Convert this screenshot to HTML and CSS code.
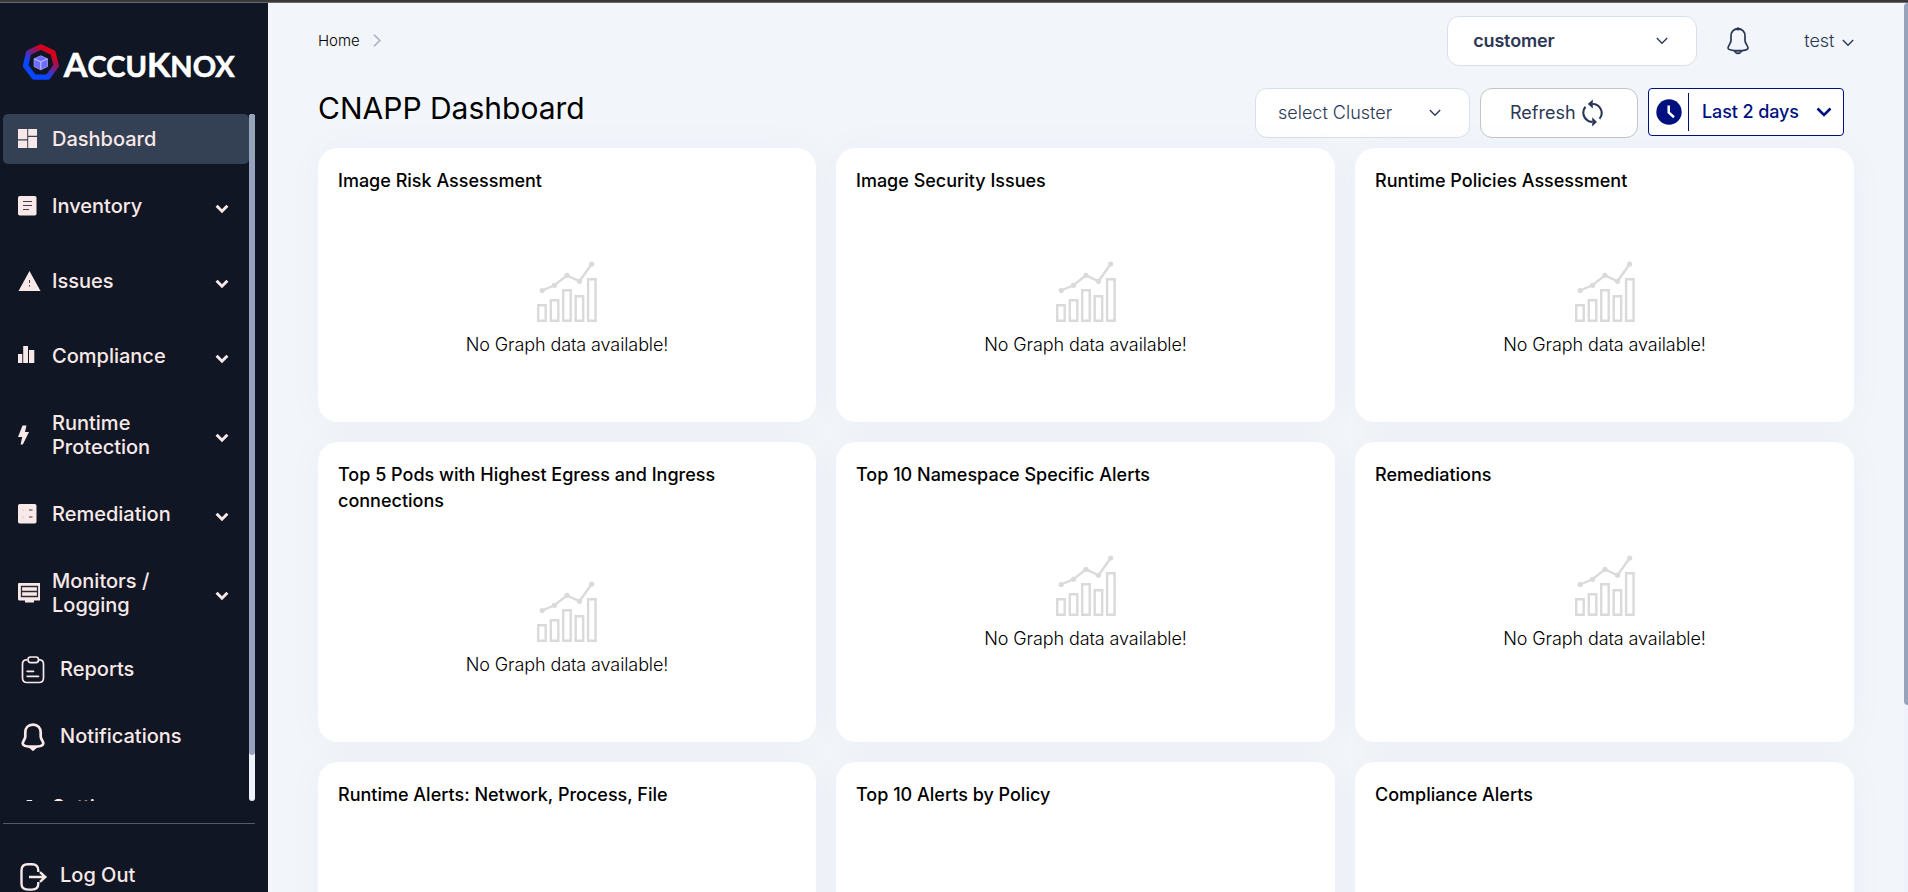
FILE: index.html
```html
<!DOCTYPE html>
<html lang="en">
<head>
<meta charset="utf-8">
<title>CNAPP Dashboard</title>
<link rel="stylesheet" href="styles.css">
</head>
<body>
<svg class="defs" aria-hidden="true">
  <symbol id="chev" viewBox="0 0 14 10"><path d="M1.6 1.8 7 7.2 12.4 1.8" fill="none" stroke="currentColor" stroke-width="3"/></symbol>
  <symbol id="thin" viewBox="0 0 12 8"><path d="M.8 1 6 6.3 11.200 1" fill="none" stroke="currentColor" stroke-width="1.3"/></symbol>
  <symbol id="chart" viewBox="0 0 60 61">
    <g fill="none" stroke="#dadada" stroke-width="2.400">
      <path d="M1.200 44.200h7.500v15.600H1.200zM13.800 39.200h7.500v20.600h-7.500zM26.200 29.200h7.500v30.600h-7.500zM38.700 35.200h7.500v24.600h-7.500zM51.100 18.200h7.500v41.600h-7.500z"/>
      <path d="M5.200 29.500 17.500 24.300 30 14.300 42.500 20.300 54.700 3"/>
    </g>
    <g fill="#dadada"><circle cx="5.200" cy="29.500" r="2.600"/><circle cx="17.500" cy="24.300" r="2.600"/><circle cx="30" cy="14.300" r="2.600"/><circle cx="42.500" cy="20.300" r="2.600"/><circle cx="54.700" cy="3" r="2.600"/></g>
  </symbol>
</svg>
<div class="topline"></div>
<div class="app">
  <aside class="sidebar">
    <svg class="logo" viewBox="0 0 220 40">
      <defs><linearGradient id="ring" x1=".8" y1=".1" x2=".25" y2=".8"><stop offset=".12" stop-color="#d4001c"/><stop offset=".85" stop-color="#0a45ff"/></linearGradient></defs>
      <path d="M18.800 2.900 31 8.700 34.200 21.600 25.800 33.100H12.200L3.600 21.800 6.600 8.700Z" fill="none" stroke="url(#ring)" stroke-width="5.400" stroke-linejoin="round"/>
      <path d="M18.800 11.800 25.500 14.800V22.600L18.800 25.800 12.100 22.600V14.800Z" fill="#6d6cff" stroke="#a09fff" stroke-width=".8"/>
      <path d="M12.300 14.900 18.800 17.900 25.300 14.900M18.800 17.900V25.500" fill="none" stroke="#c9c8ff" stroke-width="1"/>
      <text x="41.800" y="32.600" textLength="171" lengthAdjust="spacingAndGlyphs" class="logo-text">A<tspan class="small">CCU</tspan>K<tspan class="small">NOX</tspan></text>
    </svg>
    <div class="nav-wrap">
      <nav class="nav">
        <a class="item active"><svg class="ic" viewBox="0 0 24 24"><path fill="currentColor" d="M0 0h9.200v10.300H0zM10.200 0H19v6.800h-8.800zM0 11.500h9.200V19H0zM10.200 8H19v11h-8.800z"/></svg><span class="label">Dashboard</span></a>
        <a class="item first"><svg class="ic" viewBox="0 0 24 24"><rect width="18.500" height="19.500" rx="1.800" fill="currentColor"/><path d="M5 5.500h9M5 9.500h9M5 13.500h6" stroke="#453f4a" stroke-width="1.100"/></svg><span class="label">Inventory</span><svg class="chev"><use href="#chev"/></svg></a>
        <a class="item"><svg class="ic" viewBox="0 0 24 24"><path d="M11.500 0 22.500 20H.5z" fill="currentColor"/><path d="M11.500 9v3M11.500 14v1.500" stroke="#453f4a"/></svg><span class="label">Issues</span><svg class="chev"><use href="#chev"/></svg></a>
        <a class="item"><svg class="ic" viewBox="0 0 24 24"><path d="M0 8h4.300v9H0zM5.200 0H10v17H5.200zM11 4h5.300v13H11z" fill="currentColor"/></svg><span class="label">Compliance</span><svg class="chev"><use href="#chev"/></svg></a>
        <a class="item two"><svg class="ic" viewBox="0 0 24 24"><path d="M4.500 .500H8.500L7 7H11L4.800 19.500H2.600L4.200 12H0z" fill="currentColor"/></svg><span class="label">Runtime<br>Protection</span><svg class="chev"><use href="#chev"/></svg></a>
        <a class="item"><svg class="ic" viewBox="0 0 24 24"><rect width="18.500" height="19.500" rx="1.800" fill="currentColor"/><path d="M11 6h3.500M11 13h3.500" stroke="#453f4a" stroke-width="1.200"/><path d="M4.500 6H6M4.500 13H6" stroke="#cfc2c4"/></svg><span class="label">Remediation</span><svg class="chev"><use href="#chev"/></svg></a>
        <a class="item two"><svg class="ic" viewBox="0 0 24 24"><path d="M1 0H22v17.500H16V19.500H7V17.500H1.500Q0 17.500 0 16V1Q0 0 1 0Z" fill="currentColor"/><path d="M3.500 3.500H19.500V13.500H3.500ZM3.500 8.500H19.500" fill="none" stroke="#2a2934" stroke-width="1.300"/></svg><span class="label">Monitors /<br>Logging</span><svg class="chev"><use href="#chev"/></svg></a>
        <a class="item wide gap"><svg class="ic big" viewBox="0 0 24 28"><g fill="none" stroke="currentColor" stroke-width="1.700"><path d="M6 3.800H5Q1.500 4 1.500 8V22Q1.500 26.500 6 26.500H18Q22.500 26.500 22.500 22V8Q22.500 4 19 3.800H18"/><rect x="7" y="1" width="10.500" height="5.600" rx="2.600"/><path d="M6.200 15.300H12.500M6.200 20.300H17.500" stroke-linecap="round"/></g></svg><span class="label">Reports</span></a>
        <a class="item wide"><svg class="ic big" viewBox="0 0 24 28"><path d="M12 1.600C7 1.600 4.300 5 4.300 9.300V13.500C4.300 16 1.700 18.300 1.700 20.500C1.700 23 6 23.700 12 23.700S22.300 23 22.300 20.500C22.300 18.300 19.700 16 19.700 13.500V9.300C19.700 5 17 1.600 12 1.600Z" fill="none" stroke="currentColor" stroke-width="2.700"/><path d="M6.500 23.500 12 28.200 17.500 23.500z" fill="currentColor"/></svg><span class="label">Notifications</span></a>
        <a class="item"><svg class="ic gear" viewBox="0 0 24 24"><path d="M8 0h5l1 3 2 .500 3-1 2 4-3 4 3 4-2 4-4-1-2 1-1 3H8l-1-3-2-1-4 1-2-4 3-4-3-4 2-4 3 1 2-.500z" fill="currentColor"/></svg><span class="label">Settings</span></a>
      </nav>
      <div class="track"><div class="thumb"></div></div>
    </div>
    <a class="logout"><svg class="ic out" viewBox="0 0 28 28"><path d="M18.300 9V7.500Q18.300 1.300 12 1.300H8Q1.500 1.300 1.500 7.500V20.500Q1.500 26.600 8 26.600H12Q18.300 26.600 18.300 20.500V19" fill="none" stroke="currentColor" stroke-width="2.400"/><path d="M9 14H25M20 9.200 25.300 14 20 18.800" fill="none" stroke="currentColor" stroke-width="2.400"/></svg><span class="label">Log Out</span></a>
  </aside>
  <main class="main">
    <header class="header">
      <div class="crumb">Home<svg width="8" height="13" viewBox="0 0 8 13"><path d="M1 .8 6.800 6.500 1 12.200" fill="none" stroke="#a9adc4" stroke-width="1.500"/></svg></div>
      <div class="box customer"><span>customer</span><svg class="thin"><use href="#thin"/></svg></div>
      <svg class="bell" viewBox="0 0 22 28"><path d="M11 1.800C6.500 1.800 4 5 4 9V13.500C4 16.500 1 18.500 1 21C1 23 5 23.600 11 23.600S21 23 21 21C21 18.500 18 16.500 18 13.500V9C18 5 15.500 1.800 11 1.800Z" fill="none" stroke="#2b3755" stroke-width="1.700"/><path d="M8 2.200Q11-.8 14 2.200L11 3z" fill="#2b3755" stroke="#2b3755"/><path d="M7 23.800Q11 29.500 15 23.800z" fill="#7d87a0" stroke="#2b3755" stroke-width="1.300"/></svg>
      <div class="user">test<svg class="thin"><use href="#thin"/></svg></div>
    </header>
    <div class="toolbar">
      <h1 class="title">CNAPP Dashboard</h1>
      <div class="box cluster"><span>select Cluster</span><svg class="thin"><use href="#thin"/></svg></div>
      <div class="box refresh"><span>Refresh</span><svg width="21" height="28" viewBox="0 0 21 28"><path d="M5.500 21.300A9 9 0 0 1 3.500 7.800M10.500 5A9 9 0 0 1 17.500 19.800M10 22.900Q7 22.900 5 21" fill="none" stroke="#2b3755" stroke-width="2.100"/><path d="M10.800.5V9.500L5.800 5zM10.200 18.300V27.500L15 23z" fill="#2b3755"/></svg></div>
      <div class="range"><svg width="26" height="26" viewBox="0 0 26 26"><circle cx="13" cy="13" r="12.700" fill="#00107f"/><path d="M12.700 6.500V13.500L18 18.200" fill="none" stroke="#fff" stroke-width="2.500"/></svg><i class="sep"></i><span>Last 2 days</span><svg class="rchev" viewBox="0 0 16 10"><path d="M1.500 1.500 8 8 14.500 1.500" fill="none" stroke="#00107f" stroke-width="2.600"/></svg></div>
    </div>
    <section class="grid">
      <article class="card"><h2>Image Risk Assessment</h2><div class="empty"><svg><use href="#chart"/></svg><p>No Graph data available!</p></div></article>
      <article class="card"><h2>Image Security Issues</h2><div class="empty"><svg><use href="#chart"/></svg><p>No Graph data available!</p></div></article>
      <article class="card"><h2>Runtime Policies Assessment</h2><div class="empty"><svg><use href="#chart"/></svg><p>No Graph data available!</p></div></article>
      <article class="card"><h2>Top 5 Pods with Highest Egress and Ingress connections</h2><div class="empty"><svg><use href="#chart"/></svg><p>No Graph data available!</p></div></article>
      <article class="card"><h2>Top 10 Namespace Specific Alerts</h2><div class="empty"><svg><use href="#chart"/></svg><p>No Graph data available!</p></div></article>
      <article class="card"><h2>Remediations</h2><div class="empty"><svg><use href="#chart"/></svg><p>No Graph data available!</p></div></article>
      <article class="card"><h2>Runtime Alerts: Network, Process, File</h2></article>
      <article class="card"><h2>Top 10 Alerts by Policy</h2></article>
      <article class="card"><h2>Compliance Alerts</h2></article>
    </section>
  </main>
  <div class="page-track"><div class="page-thumb"></div></div>
</div>
</body>
</html>
```
FILE: styles.css
```css
* { box-sizing: border-box; }
html, body { height: 892px; overflow: hidden; }
body { margin: 0; font-family: Inter, "Liberation Sans", sans-serif; background: #f2f5fa; color: #000; }
h1, h2, p { margin: 0; }
svg { flex: none; display: block; }
.defs { position: absolute; width: 0; height: 0; }
.topline { height: 3px; background: #39393c; border-bottom: 1px solid #6a6a6e; }
.app { display: flex; height: 889px; overflow: hidden; }

.sidebar { width: 268px; flex: none; background: #101624; color: #f8e9e8; font-size: 20px; font-weight: 500; }
.logo { width: 220px; height: 40px; margin: 41px 0 0 22px; }
.logo-text { font-family: Lato, sans-serif; font-weight: 700; font-size: 33px; fill: #fff; stroke: #fff; stroke-width: .6px; }
.logo-text .small { font-size: 28px; }
.nav-wrap { display: flex; width: 252px; height: 687px; margin: 30px 0 0 3px; }
.nav { width: 246px; overflow: hidden; }
.item { display: flex; align-items: center; height: 75px; padding-left: 15px; line-height: 24px; }
.item.active { height: 50px; background: #344054; border-radius: 5px; }
.item.first { margin-top: 4px; }
.item.two { height: 83px; }
.item.wide { height: 67px; padding-left: 18px; }
.item.gap { margin-top: 1px; }
.ic { width: 24px; height: 24px; margin-right: 10px; transform: translateY(2px); }
.ic.big { height: 28px; margin-right: 15px; transform: translateY(1px); }
.ic.gear { transform: translate(1px, 5px); }
.label { flex: 1; }
.chev { width: 14px; height: 10px; margin: 6px 20.5px 0 0; }
.track { width: 6px; background: #eef2fa; border-radius: 3px; }
.thumb { height: 641px; background: #97a3bb; border-radius: 3px; }
.logout { display: flex; align-items: center; width: 252px; height: 103px; margin: 22px 0 0 3px; padding-left: 17px; border-top: 1px solid #555a66; }
.ic.out { width: 28px; height: 28px; margin-right: 12px; }

.main { flex: 1; min-width: 0; padding: 13px 50px 0; }
.header { display: flex; align-items: center; height: 50px; }
.crumb { display: flex; align-items: center; gap: 13px; flex: 1; padding-bottom: 1px; font-size: 15px; font-weight: 350; }
.box { display: flex; align-items: center; height: 50px; background: #fff; border: 1px solid #d9dfec; border-radius: 12px; font-size: 18px; color: #2b3755; padding-bottom: 1px; }
.thin { width: 12px; height: 8px; }
.customer { width: 250px; padding: 0 28px 1px 25px; justify-content: space-between; font-weight: 600; letter-spacing: -.15px; }
.bell { width: 22px; height: 28px; margin: 0 55px 1px 30px; }
.user { display: flex; align-items: center; gap: 7px; padding: 0 0 1px; font-size: 18px; font-weight: 300; color: #2b3755; }
.user .thin { margin: 4px .5px 0 0; }
.toolbar { display: flex; height: 50px; margin-top: 22px; padding-right: 10px; }
.title { flex: 1; font-size: 30px; line-height: 40px; font-weight: 400; }
.cluster { width: 215px; padding: 0 28px 1px 22px; justify-content: space-between; font-weight: 300; }
.refresh { width: 158px; margin: 0 10px; padding-left: 29px; gap: 6px; border-color: #c4c4c4; font-weight: 400; }
.range { display: flex; align-items: center; width: 196px; height: 48px; padding: 0 0 1px 7px; background: #fff; border: 1px solid #00107f; border-radius: 4px; color: #00107f; font-size: 18px; font-weight: 500; letter-spacing: -.1px; }
.sep { width: 1px; height: 38px; margin: 0 13px 0 6px; background: #00107f; }
.rchev { width: 16px; height: 10px; margin-left: 17px; }

.grid { display: grid; grid-template-columns: 498px 1fr 1fr; grid-template-rows: auto auto 300px; gap: 20px; margin-top: 10px; }
.card { padding: 20px; background: #fff; border-radius: 20px; box-shadow: 0 0 40px rgba(30, 60, 110, .03); }
.card h2 { font-size: 18px; line-height: 26px; font-weight: 500; }
.empty { display: flex; flex-direction: column; align-items: center; height: 208px; padding-top: 67px; }
.empty svg { width: 60px; height: 61px; }
.empty p { margin-top: 10px; font-size: 18px; line-height: 26px; font-weight: 350; letter-spacing: -.1px; }
.page-track { width: 4px; flex: none; background: #eef2fb; }
.page-thumb { height: 702px; background: #97a3bb; border-radius: 4px 0 0 4px; }
```
